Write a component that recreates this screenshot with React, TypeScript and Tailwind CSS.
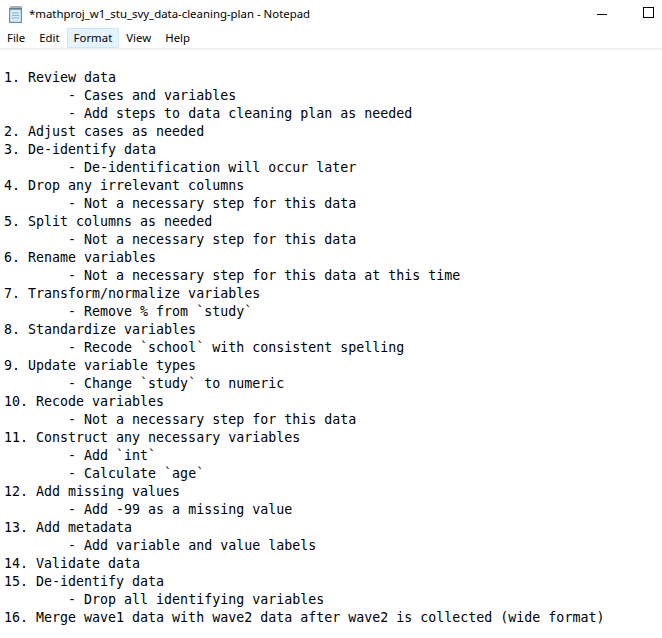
const lines = [
  "1. Review data",
  "\t- Cases and variables",
  "\t- Add steps to data cleaning plan as needed",
  "2. Adjust cases as needed",
  "3. De-identify data",
  "\t- De-identification will occur later",
  "4. Drop any irrelevant columns",
  "\t- Not a necessary step for this data",
  "5. Split columns as needed",
  "\t- Not a necessary step for this data",
  "6. Rename variables",
  "\t- Not a necessary step for this data at this time",
  "7. Transform/normalize variables",
  "\t- Remove % from `study`",
  "8. Standardize variables",
  "\t- Recode `school` with consistent spelling",
  "9. Update variable types",
  "\t- Change `study` to numeric",
  "10. Recode variables",
  "\t- Not a necessary step for this data",
  "11. Construct any necessary variables",
  "\t- Add `int`",
  "\t- Calculate `age`",
  "12. Add missing values",
  "\t- Add -99 as a missing value",
  "13. Add metadata",
  "\t- Add variable and value labels",
  "14. Validate data",
  "15. De-identify data",
  "\t- Drop all identifying variables",
  "16. Merge wave1 data with wave2 data after wave2 is collected (wide format)",
];

const menus = ["File", "Edit", "Format", "View", "Help"];

function NotepadIcon() {
  return (
    <svg width="16" height="18" viewBox="0 0 16 18" className="shrink-0">
      <rect x="1.5" y="3.5" width="12" height="14" fill="#b9dcf2" stroke="#6e8ea6" />
      <rect x="3" y="5" width="9" height="11" fill="#d5ecfa" />
      <line x1="4" y1="8" x2="11" y2="8" stroke="#8fb2c9" />
      <line x1="4" y1="10.5" x2="11" y2="10.5" stroke="#8fb2c9" />
      <line x1="4" y1="13" x2="11" y2="13" stroke="#8fb2c9" />
      {[3, 5, 7, 9, 11, 13].map((x) => (
        <rect key={x} x={x - 0.5} y="1" width="1" height="4" fill="#5a6b78" />
      ))}
    </svg>
  );
}

export default function App() {
  return (
    <div className="w-[662px] h-[638px] overflow-hidden bg-white flex flex-col font-['Noto_Sans',sans-serif]">
      <div className="h-[28px] flex items-center shrink-0">
        <div className="pl-[8px] pr-[5px] flex items-center">
          <NotepadIcon />
        </div>
        <span className="text-[11.4px] text-black leading-none">
          *mathproj_w1_stu_svy_data-cleaning-plan - Notepad
        </span>
        <div className="ml-auto mr-[-9px] flex items-center">
          <div className="w-[46px] h-[28px] flex items-center justify-center">
            <div className="w-[10px] h-px bg-black" />
          </div>
          <div className="w-[46px] h-[28px] flex items-center justify-center">
            <div className="w-[11px] h-[11px] border border-black mt-[-3px]" />
          </div>
        </div>
      </div>
      <div className="h-[20px] flex items-stretch shrink-0">
        {menus.map((m) => (
          <div
            key={m}
            className={
              m === "Format"
                ? "px-[6px] flex items-center text-[11.4px] bg-[#e5f3ff] border border-[#cce8ff]"
                : "px-[6px] flex items-center text-[11.4px] border border-transparent"
            }
          >
            {m}
          </div>
        ))}
      </div>
      <div className="h-[2px] bg-[#f0f0f0] shrink-0" />
      <div className="pt-[19px] pl-[4px] font-['DejaVu_Sans_Mono',monospace] text-[13.3px] leading-[18px] text-black whitespace-pre [tab-size:8]">
        {lines.map((l, i) => (
          <div key={i}>{l}</div>
        ))}
      </div>
    </div>
  );
}
